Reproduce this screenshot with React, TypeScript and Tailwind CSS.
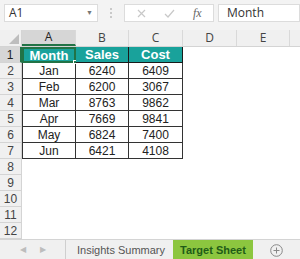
import React from 'react';

const rows = [
  ['Jan', '6240', '6409'],
  ['Feb', '6200', '3067'],
  ['Mar', '8763', '9862'],
  ['Apr', '7669', '9841'],
  ['May', '6824', '7400'],
  ['Jun', '6421', '4108'],
];

const cols = ['A', 'B', 'C', 'D', 'E'];
const colW = ['w-[54px]', 'w-[53px]', 'w-[54px]', 'w-[54px]', 'w-[53px]'];

const font = { fontFamily: '"Open Sans", "Liberation Sans", sans-serif' };
const cellFont = { fontFamily: '"Liberation Sans", Arial, sans-serif' };

function Cell({ i, children, edge }: { i: number; children?: React.ReactNode; edge?: string }) {
  return (
    <div
      className={`${colW[i]} h-full shrink-0 flex items-center justify-center text-[12px] leading-none text-[#222] ${edge ?? ''}`}
      style={cellFont}
    >
      {children}
    </div>
  );
}

export default function App() {
  return (
    <div className="w-[300px] h-[259px] bg-white overflow-hidden flex flex-col select-none" style={font}>
      {/* formula bar */}
      <div className="h-[30px] bg-[#f3f3f3] flex items-start pt-[4px] pl-[4px] shrink-0">
        <div className="w-[94px] h-[18px] bg-white border border-[#dcdcdc] flex items-center justify-between px-[4px]">
          <span className="text-[12px] text-[#333]">A1</span>
          <span className="text-[7px] text-[#777]">▼</span>
        </div>
        <div className="w-[26px] h-[18px] flex flex-col items-center justify-center gap-[2px]">
          <span className="w-[2px] h-[2px] bg-[#bbb] rounded-full" />
          <span className="w-[2px] h-[2px] bg-[#bbb] rounded-full" />
          <span className="w-[2px] h-[2px] bg-[#bbb] rounded-full" />
        </div>
        <div className="w-[90px] h-[18px] bg-white border border-[#dcdcdc] flex items-center pl-[12px] gap-[18px]">
          <svg width="9" height="9" viewBox="0 0 9 9"><path d="M1 1L8 8M8 1L1 8" stroke="#c8c8c8" strokeWidth="1.2" /></svg>
          <svg width="11" height="9" viewBox="0 0 11 9"><path d="M1 5L4 8L10 1" stroke="#c8c8c8" strokeWidth="1.2" fill="none" /></svg>
          <span className="text-[12px] italic text-[#666]" style={{ fontFamily: '"Liberation Serif", serif' }}>fx</span>
        </div>
        <div className="ml-[4px] flex-1 h-[18px] bg-white border border-[#dcdcdc] flex items-center pl-[8px]">
          <span className="text-[12px] text-[#333]">Month</span>
        </div>
      </div>

      {/* column headers */}
      <div className="h-[17px] flex shrink-0 bg-[#f0f0f0] border-b border-[#d4d4d4]">
        <div className="w-[22px] h-full shrink-0 border-r border-[#d4d4d4] flex items-end justify-end p-[2px]">
          <svg width="10" height="10" viewBox="0 0 10 10"><path d="M10 0L10 10L0 10Z" fill="#bdbdbd" /></svg>
        </div>
        {cols.map((c, i) => (
          <div
            key={c}
            className={`${colW[i]} h-full shrink-0 flex items-center justify-center text-[12px] leading-none border-r border-[#d9d9d9] ${
              i === 0 ? 'bg-[#d6d6d6] text-[#222] border-b-2 border-b-[#217346]' : 'text-[#444]'
            }`}
          >
            {c}
          </div>
        ))}
        <div className="flex-1" />
      </div>

      {/* grid */}
      <div className="flex-1 flex flex-col">
        {Array.from({ length: 12 }, (_, r) => {
          const n = r + 1;
          const data = n === 1 ? ['Month', 'Sales', 'Cost'] : rows[n - 2];
          return (
            <div key={n} className="h-[16px] flex shrink-0">
              <div
                className={`w-[22px] h-full shrink-0 flex items-center justify-center text-[12px] leading-none border-r border-b border-[#d4d4d4] ${
                  n === 1 ? 'bg-[#d6d6d6] text-[#222] border-r-2 border-r-[#217346]' : 'bg-[#f0f0f0] text-[#444]'
                }`}
                style={cellFont}
              >
                {n}
              </div>
              {n === 1 &&
                data!.map((t, i) => (
                  <Cell
                    key={i}
                    i={i}
                    edge={`bg-[#19a29b] font-bold relative ${i === 0 ? 'border-2 border-[#217346]' : 'border-b border-r border-[#1a1a1a]'}`}
                  >
                    <span className="text-white text-[13px] leading-none">{t}</span>
                    {i === 0 && <span className="absolute right-[-3px] bottom-[-3px] w-[4px] h-[4px] bg-[#217346] border border-white" />}
                  </Cell>
                ))}
              {n > 1 && n <= 7 &&
                data!.map((t, i) => (
                  <Cell key={i} i={i} edge={`border-b border-r border-[#333] ${i === 0 ? 'border-l' : ''}`}>
                    {t}
                  </Cell>
                ))}
            </div>
          );
        })}
      </div>

      {/* sheet tabs */}
      <div
        className="h-[21px] bg-[#f0f0f0] border-t border-[#d4d4d4] flex items-center shrink-0 text-[11px]"
        style={cellFont}
      >
        <div className="w-[66px] h-full flex items-center justify-center gap-[14px] border-r border-[#cfcfcf] text-[#bdbdbd] text-[8px]">
          <span>◀</span>
          <span>▶</span>
        </div>
        <div className="pl-[11px] pr-[8px] text-[#555]">Insights Summary</div>
        <div className="h-full flex items-center bg-[#8cc63f] px-[7px] font-bold text-[#1f5c17]">Target Sheet</div>
        <div className="flex-1 flex items-center justify-center">
          <svg width="13" height="13" viewBox="0 0 13 13">
            <circle cx="6.5" cy="6.5" r="5.8" stroke="#888" fill="none" />
            <path d="M6.5 3.5V9.5M3.5 6.5H9.5" stroke="#888" />
          </svg>
        </div>
      </div>
    </div>
  );
}
